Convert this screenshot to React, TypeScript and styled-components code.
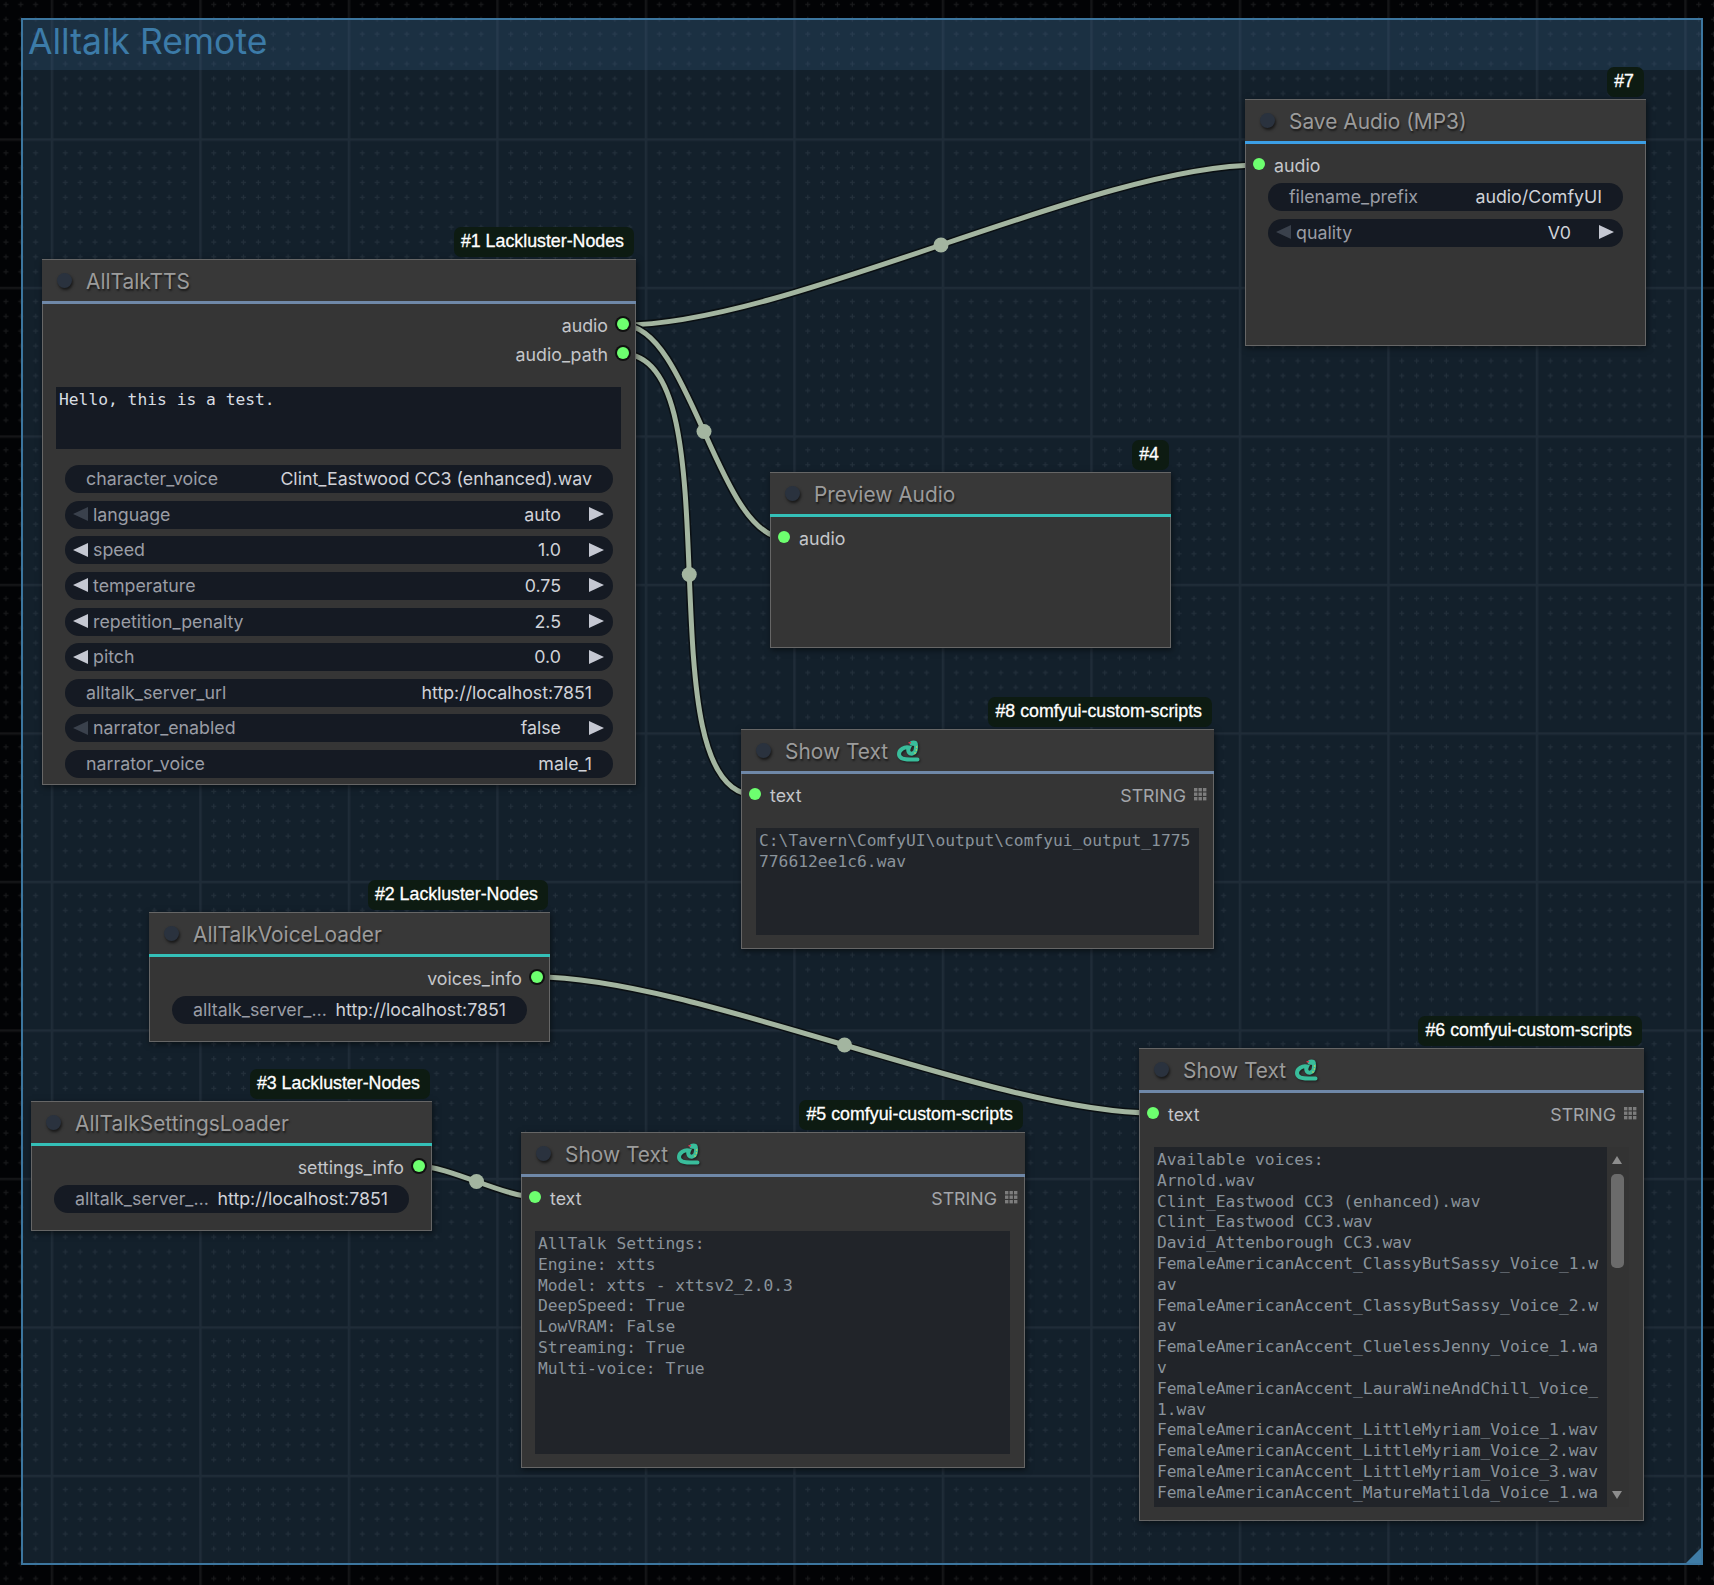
import styled, { createGlobalStyle } from "styled-components";

const GlobalStyle = createGlobalStyle`
  html, body {
    margin: 0;
    padding: 0;
    background: #020305;
  }
`;

const Canvas = styled.div`
  position: relative;
  width: 1714px;
  height: 1585px;
  overflow: hidden;
  background: #020305;
  font-family: Inter, "Noto Sans", sans-serif;
`;

const Layer = styled.svg`
  position: absolute;
  left: 0;
  top: 0;
  width: 1714px;
  height: 1585px;
`;

const Group = styled.div`
  position: absolute;
  left: 21px;
  top: 18px;
  width: 1682px;
  height: 1547px;
  box-sizing: border-box;
  border: 2px solid #3c769f;
  background: rgba(58, 100, 132, 0.3);
`;

const GroupTitle = styled.div`
  height: 50px;
  padding-left: 5px;
  background: rgba(58, 105, 148, 0.22);
  color: #3c7ba8;
  font-size: 35.5px;
  line-height: 43px;
`;

const GroupResize = styled.div`
  position: absolute;
  right: 0;
  bottom: 0;
  width: 15px;
  height: 15px;
  background: #3f7ca6;
  clip-path: polygon(100% 0, 100% 100%, 0 100%);
`;

const NodeBox = styled.div<{ $x: number; $y: number; $w: number; $h: number }>`
  position: absolute;
  left: ${(p) => p.$x}px;
  top: ${(p) => p.$y}px;
  width: ${(p) => p.$w}px;
  height: ${(p) => p.$h}px;
  box-sizing: border-box;
  display: flex;
  flex-direction: column;
  background: #353535;
  border: 1px solid #666666;
  box-shadow: 1px 2px 6px rgba(0, 0, 0, 0.5);
`;

const NodeTag = styled.div`
  position: absolute;
  right: 1px;
  bottom: calc(100% + 3px);
  height: 30px;
  padding: 0 10px 0 7px;
  border-radius: 7px;
  background: #0d1b12;
  color: #fff;
  font-family: "Liberation Sans", Arial, sans-serif;
  font-size: 17.8px;
  line-height: 29px;
  -webkit-text-stroke: 0.3px #fff;
  white-space: nowrap;
`;

const NodeHeader = styled.div<{ $line: string }>`
  flex: none;
  height: 39px;
  margin: 0 -1px;
  padding: 2px 0 0 15px;
  box-sizing: content-box;
  display: flex;
  align-items: center;
  background: #383838;
  border-bottom: 3px solid ${(p) => p.$line};
`;

const StatusDot = styled.span`
  flex: none;
  width: 15px;
  height: 15px;
  margin: -2px 14px 0 0;
  border-radius: 50%;
  background: #2a323e;
  box-shadow: 1px 2px 3px rgba(0, 0, 0, 0.6);
`;

const NodeTitle = styled.span`
  color: #9b9b9b;
  font-size: 20.9px;
  text-shadow: 1px 2px 2px rgba(0, 0, 0, 0.55);
`;

const NodeBody = styled.div`
  flex: 1;
  min-height: 0;
  padding-top: 7px;
  display: flex;
  flex-direction: column;
`;

const SlotRow = styled.div<{ $side: "in" | "out" }>`
  flex: none;
  height: 29px;
  box-sizing: border-box;
  padding: 0 6px 1px 7px;
  display: flex;
  align-items: center;
  justify-content: ${(p) => (p.$side === "out" ? "flex-end" : "flex-start")};
  gap: 9px;
  color: #c4c6ca;
  font-size: 17.8px;
`;

const SlotDot = styled.span<{ $side: "in" | "out" }>`
  flex: none;
  width: 12px;
  height: 12px;
  margin-top: -2px;
  border-radius: 50%;
  background: #6dff6f;
  box-shadow: ${(p) => (p.$side === "out" ? "0 0 0 2px #111" : "none")};
`;

const SlotType = styled.span`
  margin-left: auto;
  color: #a3a6aa;
`;

const GridIcon = styled.svg`
  flex: none;
  width: 13px;
  height: 13px;
  margin: -2px 0 0 -1px;
  color: #7d7d7d;
`;

const Widgets = styled.div<{ $top?: number }>`
  flex: none;
  margin: ${(p) => p.$top ?? 3}px 22px 0;
  display: flex;
  flex-direction: column;
  gap: 7.65px;
`;

const Pill = styled.div<{ $arrows: boolean }>`
  height: 28px;
  box-sizing: border-box;
  padding: 0 ${(p) => (p.$arrows ? 9 : 21)}px 1px ${(p) => (p.$arrows ? 8 : 21)}px;
  display: flex;
  align-items: center;
  border-radius: 14px;
  background: #151a23;
  font-size: 17.8px;
  white-space: nowrap;
`;

const PillLabel = styled.span`
  flex: 1;
  color: #9a9da5;
`;

const PillValue = styled.span`
  color: #d0d2d8;
`;

const Arrow = styled.span<{ $dir: "left" | "right"; $off?: boolean }>`
  flex: none;
  width: 0;
  height: 0;
  border-top: 7.5px solid transparent;
  border-bottom: 7.5px solid transparent;
  ${(p) =>
    p.$dir === "left"
      ? `border-right: 15px solid ${p.$off ? "#3a414c" : "#c5c8d2"}; margin-right: 5px;`
      : `border-left: 15px solid #c5c8d2; margin-left: 28px;`}
`;

const TextBox = styled.div<{ $tone: "input" | "output"; $h: number; $top: number; $left?: number }>`
  flex: none;
  height: ${(p) => p.$h}px;
  margin: ${(p) => p.$top}px 14px 0 ${(p) => p.$left ?? 14}px;
  display: flex;
  overflow: hidden;
  background: ${(p) => (p.$tone === "input" ? "#151a23" : "#212429")};
  color: ${(p) => (p.$tone === "input" ? "#d8dde2" : "#8a939b")};
  font-family: "DejaVu Sans Mono", monospace;
  font-size: 16.3px;
  line-height: 20.8px;
`;

const TextContent = styled.div`
  flex: 1;
  min-width: 0;
  padding: 3px 3px 0;
  white-space: pre-wrap;
  word-break: break-all;
  overflow: hidden;
`;

const ScrollBar = styled.div`
  flex: none;
  position: relative;
  width: 22px;
  background: #333333;
`;

const ScrollThumb = styled.div`
  position: absolute;
  left: 4px;
  top: 27px;
  width: 13px;
  height: 94px;
  border-radius: 5px;
  background: #6b6b6b;
`;

const ScrollArrow = styled.span<{ $dir: "up" | "down" }>`
  position: absolute;
  left: 5px;
  ${(p) => (p.$dir === "up" ? "top: 9px;" : "bottom: 8px;")}
  border-left: 5.5px solid transparent;
  border-right: 5.5px solid transparent;
  ${(p) => (p.$dir === "up" ? "border-bottom" : "border-top")}: 8px solid #8d8d8d;
`;

const SnakeIcon = styled.svg`
  flex: none;
  width: 24px;
  height: 24px;
  margin: -1px 0 0 8px;
  filter: drop-shadow(1px 1px 1px rgba(0, 0, 0, 0.5));
`;

const Snake = () => (
  <SnakeIcon viewBox="0 0 24 24">
    <path
      d="M18 4.5C20.5 4.5 20.5 8 19.5 11.5C18.5 15 14.5 15.5 13 13.5C11.5 11.5 13 8.5 13 8.5C8.5 7.5 3 10.5 3 15C3 19.5 9 20.5 14 20.5L21.5 20.5"
      fill="none"
      stroke="#39bd9b"
      strokeWidth="4"
      strokeLinecap="round"
    />
    <ellipse cx="17.5" cy="4.2" rx="4" ry="2.6" fill="#39bd9b" />
    <rect x="12.5" y="3" width="2.5" height="1.4" fill="#d8344f" />
    <circle cx="20.6" cy="8" r="0.8" fill="#d9d64a" />
    <circle cx="20.4" cy="11" r="0.8" fill="#d9d64a" />
    <circle cx="19" cy="14" r="0.8" fill="#d9d64a" />
  </SnakeIcon>
);

const TypeGrid = () => (
  <GridIcon viewBox="0 0 13 13">
    {[0, 4.5, 9].flatMap((y) =>
      [0, 4.5, 9].map((x) => (
        <rect key={`${x}-${y}`} x={x} y={y} width="3.4" height="3.4" fill="currentColor" />
      )),
    )}
  </GridIcon>
);

const Slot = ({ side, label, type }: { side: "in" | "out"; label: string; type?: string }) => (
  <SlotRow $side={side}>
    {side === "in" && <SlotDot $side={side} />}
    <span>{label}</span>
    {type && <SlotType>{type}</SlotType>}
    {type && <TypeGrid />}
    {side === "out" && <SlotDot $side={side} />}
  </SlotRow>
);

const Widget = ({
  label,
  value,
  arrows,
  leftOff,
}: {
  label: string;
  value: string;
  arrows?: boolean;
  leftOff?: boolean;
}) => (
  <Pill $arrows={!!arrows}>
    {arrows && <Arrow $dir="left" $off={leftOff} />}
    <PillLabel>{label}</PillLabel>
    <PillValue>{value}</PillValue>
    {arrows && <Arrow $dir="right" />}
  </Pill>
);

type NodeProps = {
  x: number;
  y: number;
  w: number;
  h: number;
  tag: string;
  title: string;
  line: string;
  snake?: boolean;
  children: React.ReactNode;
};

const GraphNode = ({ x, y, w, h, tag, title, line, snake, children }: NodeProps) => (
  <NodeBox $x={x} $y={y} $w={w} $h={h}>
    <NodeTag>{tag}</NodeTag>
    <NodeHeader $line={line}>
      <StatusDot />
      <NodeTitle>{title}</NodeTitle>
      {snake && <Snake />}
    </NodeHeader>
    <NodeBody>{children}</NodeBody>
  </NodeBox>
);

// slot positions on the canvas, the wires run under the nodes
const wires: [number, number, number, number][] = [
  [623, 325, 1259, 165],
  [623, 325, 785, 538],
  [623, 354, 755.5, 795],
  [536, 977, 1153, 1113],
  [418, 1166, 535, 1197],
];

const wirePath = ([x1, y1, x2, y2]: [number, number, number, number]) => {
  const off = Math.hypot(x2 - x1, y2 - y1) * 0.25;
  return `M${x1} ${y1}C${x1 + off} ${y1} ${x2 - off} ${y2} ${x2} ${y2}`;
};

const minorSteps = Array.from(Array(9), (_, i) => 14.6 + i * 14.85);
const crossPath = minorSteps
  .flatMap((cx) => minorSteps.map((cy) => `M${cx - 2.5} ${cy}h5M${cx} ${cy - 2.5}v5`))
  .join("");

const settingsText = `AllTalk Settings:
Engine: xtts
Model: xtts - xttsv2_2.0.3
DeepSpeed: True
LowVRAM: False
Streaming: True
Multi-voice: True`;

const voicesText = `Available voices:
Arnold.wav
Clint_Eastwood CC3 (enhanced).wav
Clint_Eastwood CC3.wav
David_Attenborough CC3.wav
FemaleAmericanAccent_ClassyButSassy_Voice_1.wav
FemaleAmericanAccent_ClassyButSassy_Voice_2.wav
FemaleAmericanAccent_CluelessJenny_Voice_1.wav
FemaleAmericanAccent_LauraWineAndChill_Voice_1.wav
FemaleAmericanAccent_LittleMyriam_Voice_1.wav
FemaleAmericanAccent_LittleMyriam_Voice_2.wav
FemaleAmericanAccent_LittleMyriam_Voice_3.wav
FemaleAmericanAccent_MatureMatilda_Voice_1.wav`;

export default function App() {
  return (
    <Canvas>
      <GlobalStyle />
      <Layer>
        <defs>
          <pattern
            id="grid"
            patternUnits="userSpaceOnUse"
            x="50.7"
            y="138.3"
            width="148.5"
            height="148.5"
          >
            <path d="M0 0V148.5M0 0H148.5" stroke="#fff" strokeOpacity="0.07" strokeWidth="5" fill="none" />
            <path d={crossPath} stroke="#fff" strokeOpacity="0.09" strokeWidth="1.2" fill="none" />
          </pattern>
        </defs>
        <rect width="1714" height="1585" fill="url(#grid)" />
      </Layer>

      <Group>
        <GroupTitle>Alltalk Remote</GroupTitle>
        <GroupResize />
      </Group>

      <Layer>
        {wires.map((w) => (
          <g key={w.join()} fill="none">
            <path d={wirePath(w)} stroke="#0a0f12" strokeWidth="8" />
            <path d={wirePath(w)} stroke="#a3b5a0" strokeWidth="5" />
            <circle cx={(w[0] + w[2]) / 2} cy={(w[1] + w[3]) / 2} r="7.5" fill="#a3b5a0" />
          </g>
        ))}
      </Layer>

      <GraphNode x={42} y={259} w={594} h={526} tag="#1 Lackluster-Nodes" title="AllTalkTTS" line="#6f88a8">
        <Slot side="out" label="audio" />
        <Slot side="out" label="audio_path" />
        <TextBox $tone="input" $h={62} $top={18} $left={13}>
          <TextContent>Hello, this is a test.</TextContent>
        </TextBox>
        <Widgets $top={16}>
          <Widget label="character_voice" value="Clint_Eastwood CC3 (enhanced).wav" />
          <Widget label="language" value="auto" arrows leftOff />
          <Widget label="speed" value="1.0" arrows />
          <Widget label="temperature" value="0.75" arrows />
          <Widget label="repetition_penalty" value="2.5" arrows />
          <Widget label="pitch" value="0.0" arrows />
          <Widget label="alltalk_server_url" value="http://localhost:7851" />
          <Widget label="narrator_enabled" value="false" arrows leftOff />
          <Widget label="narrator_voice" value="male_1" />
        </Widgets>
      </GraphNode>

      <GraphNode x={1245} y={99} w={401} h={247} tag="#7" title="Save Audio (MP3)" line="#3c9fe6">
        <Slot side="in" label="audio" />
        <Widgets>
          <Widget label="filename_prefix" value="audio/ComfyUI" />
          <Widget label="quality" value="V0" arrows leftOff />
        </Widgets>
      </GraphNode>

      <GraphNode x={770} y={472} w={401} h={176} tag="#4" title="Preview Audio" line="#34c0b8">
        <Slot side="in" label="audio" />
      </GraphNode>

      <GraphNode x={741} y={729} w={473} h={220} tag="#8 comfyui-custom-scripts" title="Show Text" line="#6f88a8" snake>
        <Slot side="in" label="text" type="STRING" />
        <TextBox $tone="output" $h={107} $top={18}>
          <TextContent>C:\Tavern\ComfyUI\output\comfyui_output_1775776612ee1c6.wav</TextContent>
        </TextBox>
      </GraphNode>

      <GraphNode x={149} y={912} w={401} h={130} tag="#2 Lackluster-Nodes" title="AllTalkVoiceLoader" line="#34c0b8">
        <Slot side="out" label="voices_info" />
        <Widgets>
          <Widget label="alltalk_server_…" value="http://localhost:7851" />
        </Widgets>
      </GraphNode>

      <GraphNode x={31} y={1101} w={401} h={130} tag="#3 Lackluster-Nodes" title="AllTalkSettingsLoader" line="#34c0b8">
        <Slot side="out" label="settings_info" />
        <Widgets>
          <Widget label="alltalk_server_…" value="http://localhost:7851" />
        </Widgets>
      </GraphNode>

      <GraphNode x={521} y={1132} w={504} h={336} tag="#5 comfyui-custom-scripts" title="Show Text" line="#6f88a8" snake>
        <Slot side="in" label="text" type="STRING" />
        <TextBox $tone="output" $h={223} $top={18} $left={13}>
          <TextContent>{settingsText}</TextContent>
        </TextBox>
      </GraphNode>

      <GraphNode x={1139} y={1048} w={505} h={473} tag="#6 comfyui-custom-scripts" title="Show Text" line="#6f88a8" snake>
        <Slot side="in" label="text" type="STRING" />
        <TextBox $tone="output" $h={360} $top={18}>
          <TextContent>{voicesText}</TextContent>
          <ScrollBar>
            <ScrollArrow $dir="up" />
            <ScrollThumb />
            <ScrollArrow $dir="down" />
          </ScrollBar>
        </TextBox>
      </GraphNode>
    </Canvas>
  );
}
